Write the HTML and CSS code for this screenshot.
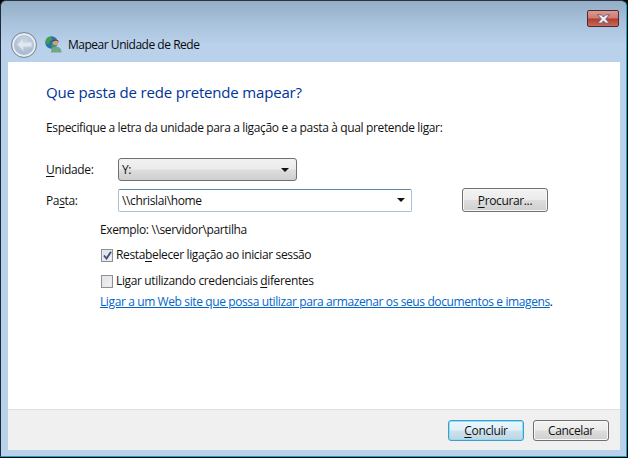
FILE: index.html
```html
<!DOCTYPE html>
<html lang="pt">
<head>
    <meta charset="UTF-8">
    <meta name="viewport" content="width=device-width, initial-scale=1.0">
    <title>Mapear Unidade de Rede</title>
    <link rel="stylesheet" href="styles.css">
</head>
<body>
    <div class="window">
        <div class="titlebar">
            <button type="button" class="close-btn" aria-label="Fechar">
                <svg width="15" height="10" viewBox="0 0 15 10">
                    <path d="M1.5 0.8 H5.3 L7.5 3 L9.7 0.8 H13.5 L9.7 5 L13.5 9.2 H9.7 L7.5 7 L5.3 9.2 H1.5 L5.3 5 Z" fill="#eeeef4" stroke="#6a5a70" stroke-width="1"/>
                </svg>
            </button>
        </div>
        <div class="navbar">
            <div class="back-btn">
                <svg width="17" height="15" viewBox="0 0 17 15">
                    <path d="M7.5 1 L1 7.5 L7.5 14 V10 H16 V5 H7.5 Z" fill="#dfe7f1" stroke="#c2cedc" stroke-width="1"/>
                </svg>
            </div>
            <svg class="wizard-icon" width="17" height="17" viewBox="0 0 17 17">
                <circle cx="6.5" cy="6.5" r="6.2" fill="#2a6db4"/>
                <path d="M1.5 3 C3 0.8 6 0.6 7 2 C7.5 4 5 4.5 4.5 6.5 C4.5 8.5 3 8.5 2 8 C0.6 6.5 0.6 4.5 1.5 3 Z" fill="#3fa23a"/>
                <path d="M6 9 C8 8 9.5 9 9 11.5 L7 12.5 Z" fill="#3fa23a"/>
                <circle cx="10.5" cy="6.5" r="3" fill="#c9a184"/>
                <path d="M7.2 6 C7.5 2.5 13.5 2.5 13.8 6 L12.5 5 C11 4.2 9.5 4.5 8.5 5.2 Z" fill="#35291f"/>
                <path d="M6 16.5 C6 11.5 9 10.5 10.5 10.5 C13 10.5 16.5 11.5 16.5 16.5 Z" fill="#6fa887"/>
            </svg>
            <span class="nav-title">Mapear Unidade de Rede</span>
        </div>

        <div class="content">
            <h1 class="heading">Que pasta de rede pretende mapear?</h1>
            <p class="intro">Especifique a letra da unidade para a ligação e a pasta à qual pretende ligar:</p>

            <div class="form-row row-drive">
                <label class="field-label"><u>U</u>nidade:</label>
                <div class="combo">
                    <span>Y:</span>
                    <i class="arrow"></i>
                </div>
            </div>
            <div class="form-row row-folder">
                <label class="field-label">Pa<u>s</u>ta:</label>
                <div class="path-input">
                    <span>\\chrislai\home</span>
                    <i class="arrow"></i>
                </div>
                <button type="button" class="btn btn-browse"><u>P</u>rocurar...</button>
            </div>

            <div class="options">
                <div class="example">Exemplo: \\servidor\partilha</div>
                <div class="check-row row-first">
                    <span class="checkbox">
                        <svg width="9" height="9" viewBox="0 0 9 9">
                            <path d="M1 4.5 L3.5 7.5 L8 0.8" fill="none" stroke="#3d4f80" stroke-width="1.9"/>
                        </svg>
                    </span>
                    <span>Resta<u>b</u>elecer ligação ao iniciar sessão</span>
                </div>
                <div class="check-row row-second">
                    <span class="checkbox"></span>
                    <span>Ligar utilizando credenciais <u>d</u>iferentes</span>
                </div>
                <div class="link-row"><a class="web-link" href="#">Ligar a um Web site que possa utilizar para armazenar os seus documentos e imagens</a>.</div>
            </div>
        </div>

        <div class="footer">
            <button type="button" class="btn btn-default"><u>C</u>oncluir</button>
            <button type="button" class="btn">Cancelar</button>
        </div>
    </div>
</body>
</html>
```

FILE: styles.css
```css
* { margin: 0; padding: 0; box-sizing: border-box; }
html, body { width: 628px; height: 458px; overflow: hidden; background: #000; }
body { font-family: "Open Sans", "Noto Sans", Arial, sans-serif; font-size: 12px; letter-spacing: -0.36px; color: #111; }
u { text-underline-offset: 2px; }

.window { width: 627px; height: 457px; display: flex; flex-direction: column; padding: 1px 0 0 1px; border-radius: 6px 6px 0 0; background: #b9d1ea; background-image: linear-gradient(#95aec8 0, #a9c2dc 22px, #b9d1ea 44px); border-top: 1px solid #2b3540; border-left: 1px solid #1d2a38; border-right: 1px solid #10a8cc; border-bottom: 1px solid #10a8cc; }

.titlebar { height: 25px; flex: none; display: flex; justify-content: flex-end; align-items: flex-start; padding: 8px 7px 0 0; }
.close-btn { width: 32px; height: 17px; border: 1px solid #4c2a3c; border-radius: 2px; background: linear-gradient(#dc9a90 0, #cf7a70 48%, #b53a2c 52%, #c86a5a 100%); display: flex; align-items: center; justify-content: center; }

.navbar { height: 35px; flex: none; display: flex; align-items: center; padding-left: 9px; }
.back-btn { width: 26px; height: 26px; border-radius: 50%; border: 1px solid #7c8794; background: radial-gradient(circle at 50% 35%, #c9d6e4, #9fb3ca 80%); box-shadow: inset 0 0 0 2px #e6ecf2; display: flex; align-items: center; justify-content: center; }
.wizard-icon { margin-left: 8px; }
.nav-title { margin-left: 6px; color: #0a0a0a; letter-spacing: -0.48px; }

.content { flex: 1; margin: 0 6px; background: #fff; padding: 0 38px; }
.heading { font-size: 15px; font-weight: 400; letter-spacing: -0.18px; color: #003399; margin-top: 19px; line-height: 22px; }
.intro { margin-top: 16px; line-height: 18px; }

.form-row { display: flex; align-items: center; }
.row-drive { margin-top: 21px; }
.row-folder { margin-top: 7px; }
.field-label { width: 72px; flex: none; }

.combo { width: 179px; height: 23px; border: 1px solid #707070; border-radius: 3px; background: linear-gradient(#f2f2f2 0, #ebebeb 48%, #dddddd 52%, #cfcfcf 100%); display: flex; align-items: center; justify-content: space-between; padding: 0 7px 0 3px; }
.path-input { width: 294px; height: 23px; border: 1px solid #abc0d8; border-top-color: #5d87a8; border-radius: 2px; display: flex; align-items: center; justify-content: space-between; padding: 0 6px 0 3px; }
.arrow { width: 0; height: 0; border-left: 4px solid transparent; border-right: 4px solid transparent; border-top: 4px solid #111; }

.btn { font: inherit; letter-spacing: inherit; color: #111; width: 76px; height: 21px; border: 1px solid #707070; border-radius: 3px; background: linear-gradient(#f3f3f3 0, #ebebeb 48%, #dddddd 52%, #cfcfcf 100%); box-shadow: inset 0 0 0 1px #f8f8f8; }
.btn-browse { width: 86px; height: 24px; margin-left: 50px; }
.btn-default { border-color: #3c9ec9; box-shadow: inset 0 0 0 1px #8fdcf5; background: linear-gradient(#eaf6fc 0, #e0f0f8 48%, #cfe2ec 52%, #bdd4e2 100%); }

.options { padding-left: 54px; }
.example { margin-top: 9px; line-height: 18px; }
.check-row { display: flex; align-items: center; gap: 3px; line-height: 18px; padding-left: 1px; }
.row-first { margin-top: 7px; }
.row-second { margin-top: 8px; }
.checkbox { width: 12px; height: 13px; flex: none; border: 1px solid #8e8f8f; background: linear-gradient(135deg, #dcdfe4, #f4f4f6); box-shadow: inset 0 0 0 1px #e8e8ea; display: flex; align-items: center; justify-content: center; }
.link-row { margin-top: 3px; line-height: 18px; white-space: nowrap; letter-spacing: -0.39px; }
.web-link { color: #0066cc; }

.footer { height: 41px; flex: none; margin: 0 6px 6px; background: #f0f0f0; border-top: 1px solid #dfdfdf; display: flex; justify-content: flex-end; align-items: flex-start; gap: 9px; padding: 10px 11px 0 0; }
```
